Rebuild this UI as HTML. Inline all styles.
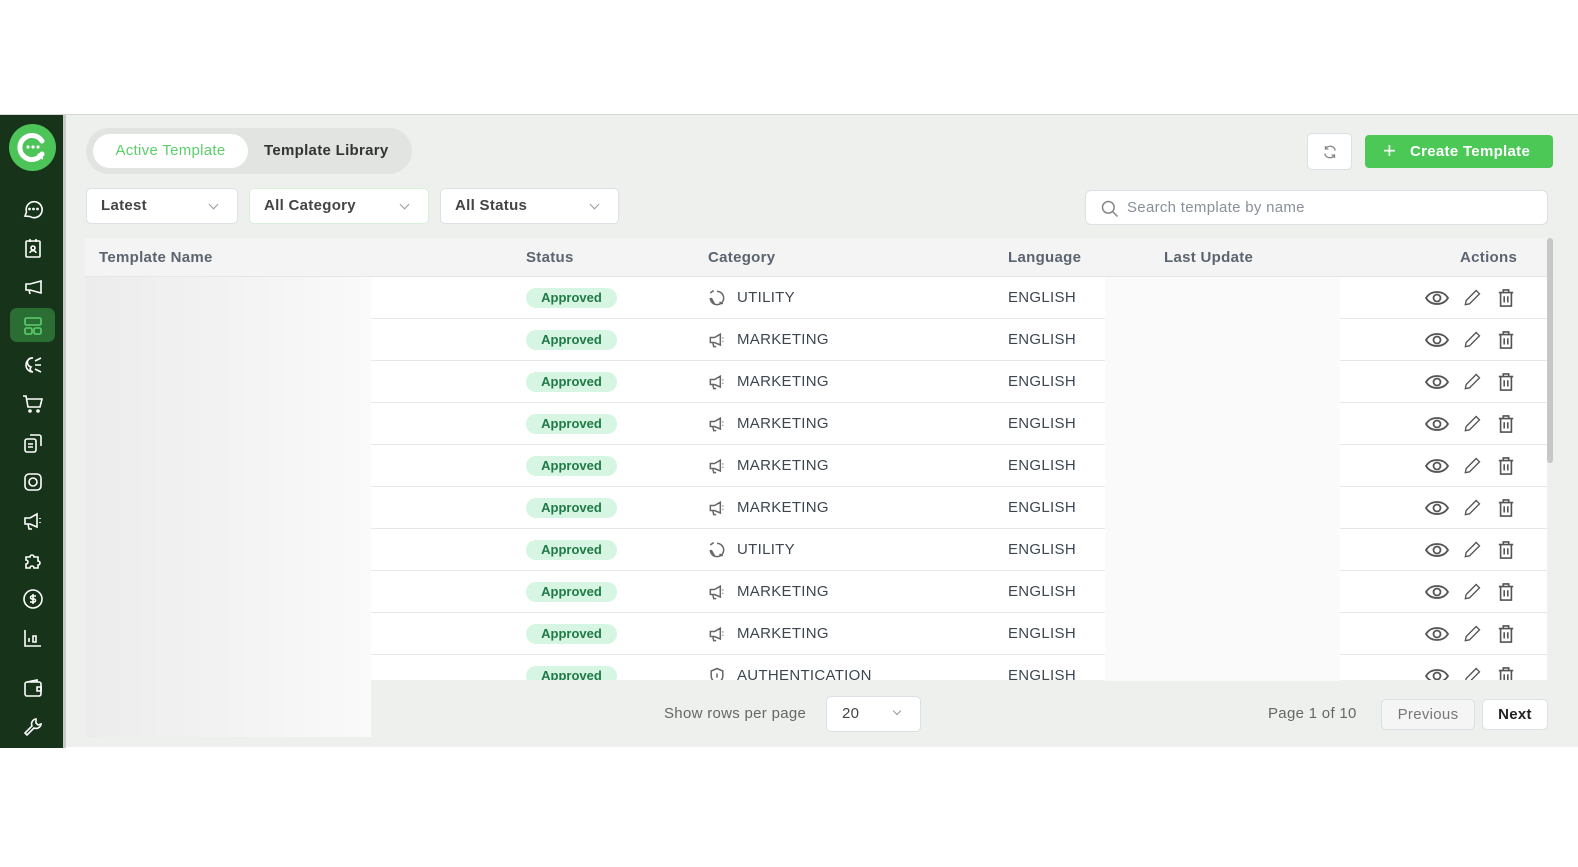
<!DOCTYPE html>
<html><head><meta charset="utf-8"><style>
*{box-sizing:border-box;margin:0;padding:0}
body{width:1578px;height:867px;background:#fff;font-family:"Liberation Sans",sans-serif;position:relative;overflow:hidden;color:#3d4650;letter-spacing:.3px}
.app{position:absolute;top:114px;left:0;width:1578px;height:633px;background:#eef0ee;border-top:1px solid #d6d6d6}
.side{position:absolute;left:0;top:0;width:66px;height:633px;background:#17341a;border-right:3px solid #c9cbc9}
.side svg{position:absolute;left:21px}
.logo{position:absolute;left:9px;top:9px;width:47px;height:47px;border-radius:50%;background:#4cc457}
.tabs{position:absolute;left:86px;top:13px;width:326px;height:46px;border-radius:23px;background:#e2e4e2}
.tab1{position:absolute;left:7px;top:6px;width:155px;height:34px;border-radius:17px;background:#fff;color:#5ccf6c;font-size:15px;line-height:34px;text-align:center}
.tab2{position:absolute;left:178px;top:6px;font-size:15px;line-height:34px;color:#333;font-weight:bold}
.btn{position:absolute;background:#fff;border:1px solid #dcdfe3;border-radius:5px}
.dd{position:absolute;top:73px;height:36px;background:#fff;border:1px solid #dde0e4;border-radius:5px;font-size:15px;line-height:34px;padding-left:14px;color:#444;font-weight:bold}
.dd:after{content:"";position:absolute;right:20px;top:12px;width:6px;height:6px;border-right:1px solid #999;border-bottom:1px solid #999;transform:rotate(45deg)}
.table{position:absolute;left:85px;top:123px;width:1462px;height:442px;background:#fff;overflow:hidden}
.thead{position:absolute;left:0;top:0;width:1462px;height:39px;background:#f3f4f3;border-bottom:1px solid #e5e7e5;font-size:15px;font-weight:bold;color:#5b6470}
.thead span{position:absolute;top:11px}
.row{position:absolute;left:0;width:1462px;height:42px;border-bottom:1px solid #e6e8e6;font-size:15px}
.row span{position:absolute;top:12px}
.badge{position:absolute;left:441px;top:11px;width:91px;height:20px;border-radius:10px;background:#d6f5e2;color:#1f7a45;font-size:13px;font-weight:bold;text-align:center;line-height:20px;letter-spacing:0}
.blur1{position:absolute;left:85px;top:162px;width:286px;height:460px;background:linear-gradient(90deg,#ececec,#f4f4f4 60%,#fafafa);z-index:2}
.blur2{position:absolute;left:1105px;top:162px;width:235px;height:404px;background:#fafafa;z-index:2}
.ic{position:absolute;top:11px}
</style></head><body>
<div class="app">
<div class="side">
<div class="logo"><svg width="47" height="47" viewBox="0 0 47 47" style="left:0;top:0"><path d="M33 17a12 12 0 1 0 0 13" fill="none" stroke="#fff" stroke-width="5" stroke-linecap="round"/><path d="M28 30l6 6v-8z" fill="#fff"/><circle cx="19" cy="23" r="1.6" fill="#fff"/><circle cx="24" cy="23" r="1.6" fill="#fff"/><circle cx="29" cy="23" r="1.6" fill="#fff"/></svg></div>
<div style="position:absolute;left:10px;top:193px;width:45px;height:34px;border-radius:7px;background:#2a6e33"></div>
<svg width="24" height="24" style="top:82px" viewBox="0 0 24 24" fill="none" stroke="#fff" stroke-width="1.6"><path d="M4 19l1.5-4A8 8 0 1 1 9 19.5z"/><circle cx="8.5" cy="12" r=".6"/><circle cx="12.5" cy="12" r=".6"/><circle cx="16.5" cy="12" r=".6"/></svg>
<svg width="24" height="24" style="top:121px" viewBox="0 0 24 24" fill="none" stroke="#fff" stroke-width="1.6"><rect x="5" y="5" width="14" height="16" rx="1"/><path d="M9 3v3M15 3v3M9 17c0-3 6-3 6 0"/><circle cx="12" cy="12" r="2"/></svg>
<svg width="24" height="24" style="top:160px" viewBox="0 0 24 24" fill="none" stroke="#fff" stroke-width="1.6"><path d="M20 6v12L9 15H5v-6h4z"/><path d="M8 15l1 4"/></svg>
<svg width="24" height="24" style="top:199px" viewBox="0 0 24 24" fill="none" stroke="#5ccf6c" stroke-width="1.6"><rect x="4" y="4" width="16" height="7" rx="1.5"/><rect x="4" y="14" width="7" height="6" rx="1.5"/><rect x="13" y="14" width="7" height="6" rx="1.5"/></svg>
<svg width="24" height="24" style="top:238px" viewBox="0 0 24 24" fill="none" stroke="#fff" stroke-width="1.6"><path d="M12 5a5 5 0 1 0 0 14a3 3 0 0 1-2-5a4 4 0 0 1 2-9zM14 8l6-3M14 12h6M14 16l6 3"/></svg>
<svg width="24" height="24" style="top:277px" viewBox="0 0 24 24" fill="none" stroke="#fff" stroke-width="1.6"><path d="M2 4h3l2 11h12l2-8H6"/><circle cx="9" cy="19" r="1"/><circle cx="17" cy="19" r="1"/></svg>
<svg width="24" height="24" style="top:316px" viewBox="0 0 24 24" fill="none" stroke="#fff" stroke-width="1.6"><rect x="4" y="8" width="11" height="13" rx="2"/><path d="M9 4h9a2 2 0 0 1 2 2v9M7 13h5M7 16h5"/></svg>
<svg width="24" height="24" style="top:355px" viewBox="0 0 24 24" fill="none" stroke="#fff" stroke-width="1.6"><rect x="4" y="4" width="16" height="16" rx="4"/><circle cx="12" cy="12" r="4"/></svg>
<svg width="24" height="24" style="top:394px" viewBox="0 0 24 24" fill="none" stroke="#fff" stroke-width="1.6"><path d="M16 5v13L9 15H4V9h5zM7 15l1 5h3M19 9v1M19 13v1"/></svg>
<svg width="24" height="24" style="top:433px" viewBox="0 0 24 24" fill="none" stroke="#fff" stroke-width="1.6"><path d="M5 9h4a2 2 0 1 1 4 0h4v4a2 2 0 1 1 0 4v3h-4a2 2 0 1 0-4 0H5v-4a2 2 0 1 0 0-4z"/></svg>
<svg width="24" height="24" style="top:472px" viewBox="0 0 24 24" fill="none" stroke="#fff" stroke-width="1.6"><circle cx="12" cy="12" r="9"/><path d="M15 9h-4a1.5 1.5 0 0 0 0 3h2a1.5 1.5 0 0 1 0 3H9M12 7v10"/></svg>
<svg width="24" height="24" style="top:511px" viewBox="0 0 24 24" fill="none" stroke="#fff" stroke-width="1.6"><path d="M4 4v16h16M8 16v-4M12 16v-6h3v6z"/></svg>
<svg width="24" height="24" style="top:561px" viewBox="0 0 24 24" fill="none" stroke="#fff" stroke-width="1.6"><rect x="4" y="6" width="16" height="14" rx="2"/><path d="M6 6l10-2v2M16 11h4v4h-4z"/></svg>
<svg width="24" height="24" style="top:600px" viewBox="0 0 24 24" fill="none" stroke="#fff" stroke-width="1.6"><path d="M15 4a5 5 0 0 0-4 7l-7 7 2 2 7-7a5 5 0 0 0 7-4l-3 1-2-2z"/></svg>
</div>
<div class="tabs"><div class="tab1">Active Template</div><div class="tab2">Template Library</div></div>
<div class="btn" style="left:1307px;top:18px;width:45px;height:37px"><svg width="18" height="18" viewBox="0 0 24 24" style="position:absolute;left:13px;top:9px" fill="none" stroke="#888" stroke-width="1.8"><path d="M19 10A7 7 0 0 0 6 8M5 14a7 7 0 0 0 13 2M6 4v4h4M18 20v-4h-4"/></svg></div>
<div style="position:absolute;left:1365px;top:20px;width:188px;height:33px;background:#4cc857;border-radius:4px;color:#fff;font-weight:bold;font-size:15px;line-height:33px;padding-left:45px">Create Template<span style="position:absolute;left:18px;top:-1px;font-size:22px;font-weight:normal">+</span></div>
<div class="dd" style="left:86px;width:152px">Latest</div>
<div class="dd" style="left:249px;width:180px;border-color:#d8efd8">All Category</div>
<div class="dd" style="left:440px;width:179px">All Status</div>
<div class="btn" style="left:1085px;top:75px;width:463px;height:35px;border-radius:6px;color:#8a9099;font-size:15px;line-height:33px;padding-left:41px">Search template by name<svg width="20" height="20" viewBox="0 0 24 24" style="position:absolute;left:14px;top:8px" fill="none" stroke="#888" stroke-width="1.8"><circle cx="10" cy="10" r="7"/><path d="M15 15l6 6"/></svg></div>
<div class="table">
<div class="thead"><span style="left:14px">Template Name</span><span style="left:441px">Status</span><span style="left:623px">Category</span><span style="left:923px">Language</span><span style="left:1079px">Last Update</span><span style="left:1375px">Actions</span></div>
</div>
<div style="position:absolute;left:1547px;top:123px;width:6px;height:225px;background:#c6c8c6;border-radius:3px"></div>
<div class="blur1"></div><div class="blur2"></div>
<div style="position:absolute;left:664px;top:590px;font-size:15px;color:#666">Show rows per page</div>
<div class="btn" style="left:826px;top:581px;width:95px;height:36px;font-size:15px;line-height:34px;padding-left:15px;color:#444">20<span style="position:absolute;right:20px;top:11px;width:6px;height:6px;border-right:1px solid #999;border-bottom:1px solid #999;transform:rotate(45deg)"></span></div>
<div style="position:absolute;left:1268px;top:590px;font-size:15px;color:#666">Page 1 of 10</div>
<div class="btn" style="left:1381px;top:584px;width:94px;height:31px;background:#f4f5f4;font-size:15px;line-height:29px;text-align:center;color:#777">Previous</div>
<div class="btn" style="left:1482px;top:584px;width:66px;height:31px;font-size:15px;line-height:29px;text-align:center;color:#222;font-weight:bold">Next</div>
</div>
<script>
var cats=["U","M","M","M","M","M","U","M","M","A"];
var t=document.querySelector('.table'),h='';
var util='<svg class="ic" style="left:622px" width="20" height="20" viewBox="0 0 24 24" fill="none" stroke="#666" stroke-width="1.8"><path d="M4 6l4-3M12 4a8 8 0 1 1-8 8M5 12l4 7M19 19l-4-2"/></svg>';
var mk='<svg class="ic" style="left:622px" width="20" height="20" viewBox="0 0 24 24" fill="none" stroke="#666" stroke-width="1.8"><path d="M16 5v13L9 15H4V9h5zM7 15l1 5h3M19 9v1M19 13v1"/></svg>';
var au='<svg class="ic" style="left:622px" width="20" height="20" viewBox="0 0 24 24" fill="none" stroke="#666" stroke-width="1.8"><path d="M12 3l7 3v6c0 4-3 7-7 9c-4-2-7-5-7-9V6z"/><path d="M12 9v5"/></svg>';
var acts='<svg class="ic" style="left:1340px" width="24" height="20" viewBox="0 0 24 20" fill="none" stroke="#555" stroke-width="1.8"><path d="M1 10c5-8 17-8 22 0c-5 8-17 8-22 0z"/><circle cx="12" cy="10" r="3.5"/></svg><svg class="ic" style="left:1377px" width="20" height="20" viewBox="0 0 24 24" fill="none" stroke="#555" stroke-width="1.6"><path d="M4 20l1-5L17 3l4 4L9 19z"/></svg><svg class="ic" style="left:1412px" width="18" height="20" viewBox="0 0 20 22" fill="none" stroke="#555" stroke-width="1.8"><path d="M2 5h16M7 5V2h6v3M4 5v15h12V5M8 9v7M12 9v7"/></svg>';
for(var i=0;i<10;i++){var c=cats[i];h+='<div class="row" style="top:'+(39+i*42)+'px"><div class="badge">Approved</div>'+(c=="U"?util:c=="M"?mk:au)+'<span style="left:652px">'+(c=="U"?"UTILITY":c=="M"?"MARKETING":"AUTHENTICATION")+'</span><span style="left:923px">ENGLISH</span>'+acts+'</div>';}
t.innerHTML+=h;
</script>
</body></html>
